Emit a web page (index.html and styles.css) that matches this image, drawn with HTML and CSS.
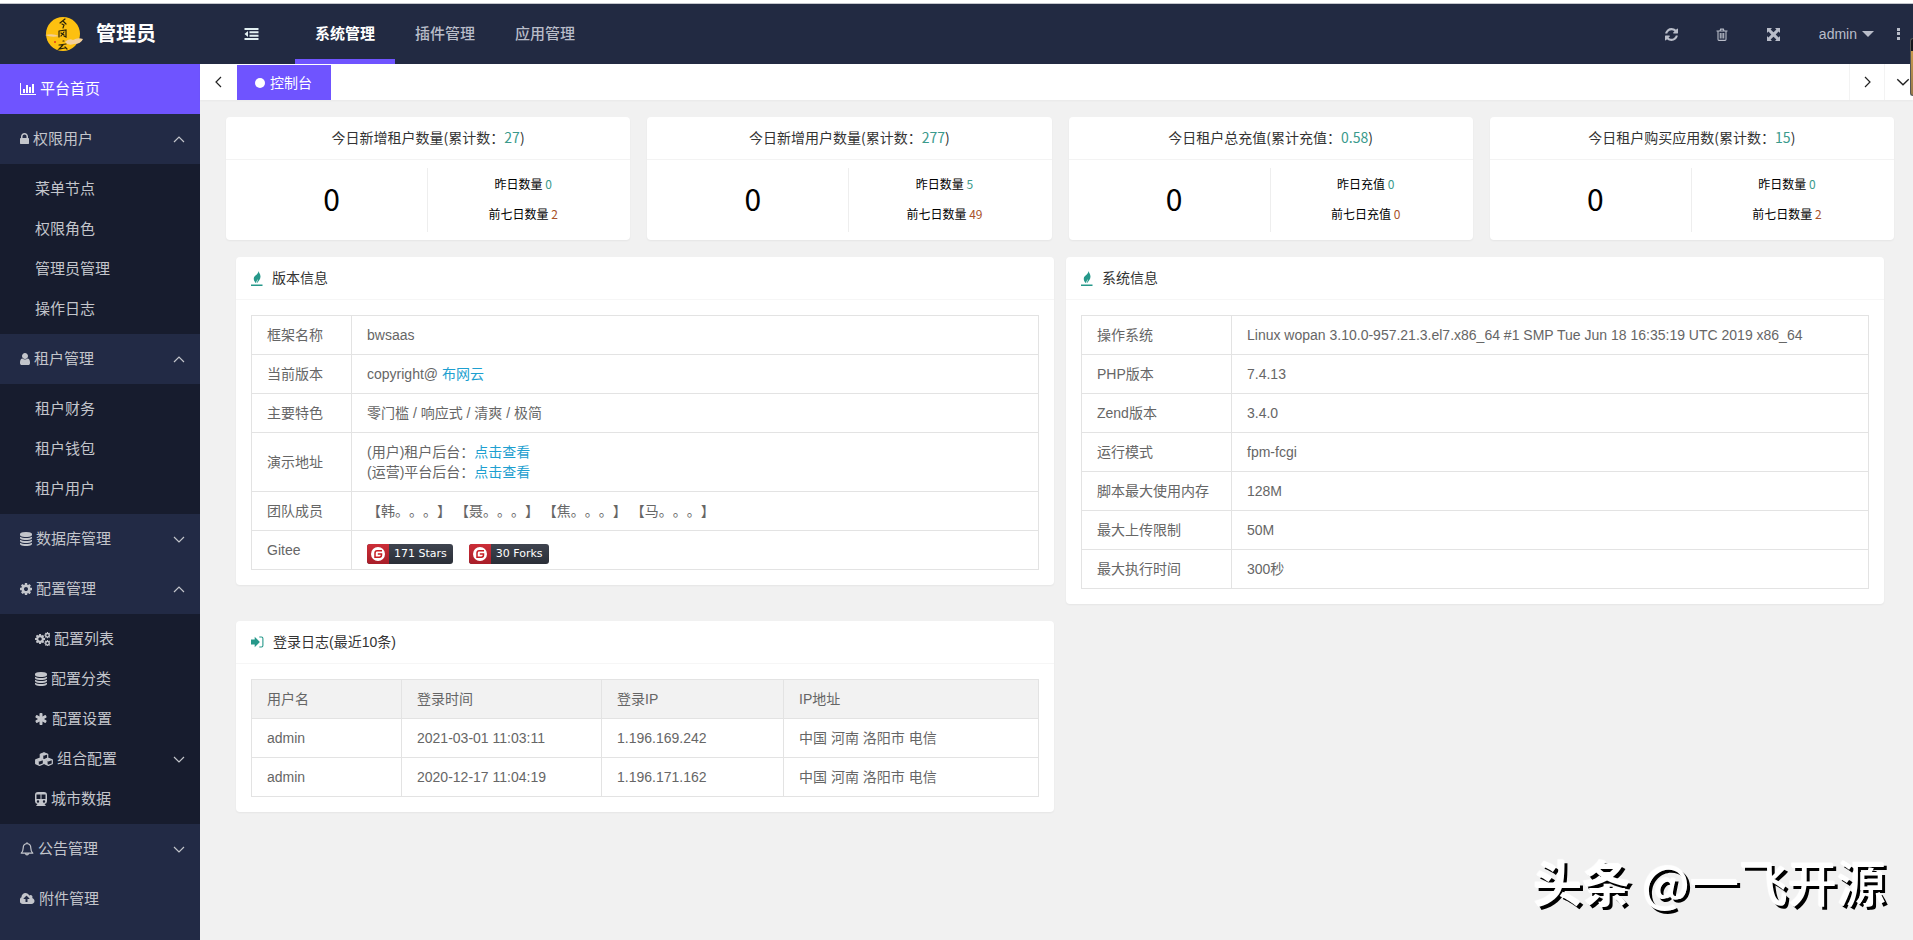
FILE: index.html
```html
<!DOCTYPE html>
<html lang="zh-CN">
<head>
<meta charset="utf-8">
<title>管理员</title>
<link rel="stylesheet" href="styles.css">
</head>
<body>
<svg class="sprite" aria-hidden="true">
  <symbol id="i-chart" viewBox="0 0 2048 1792"><path d="M640 896v512h-256v-512h256zm384-512v1024h-256v-1024h256zm1024 1152v128h-2048v-1536h128v1408h1920zm-640-896v768h-256v-768h256zm384-384v1152h-256v-1152h256z"/></symbol>
  <symbol id="i-lock" viewBox="320 0 1152 1792"><path d="M640 768h512v-192q0-106-75-181t-181-75-181 75-75 181v192zm832 96v576q0 40-28 68t-68 28h-960q-40 0-68-28t-28-68v-576q0-40 28-68t68-28h32v-192q0-184 132-316t316-132 316 132 132 316v192h32q40 0 68 28t28 68z"/></symbol>
  <symbol id="i-user" viewBox="256 0 1280 1792"><path d="M1536 1399q0 109-62.500 187t-150.500 78h-854q-88 0-150.500-78t-62.500-187q0-85 8.500-160.500t31.500-152 58.500-131 94-89 134.500-34.500q131 128 313 128t313-128q76 0 134.500 34.500t94 89 58.500 131 31.500 152 8.500 160.500zm-256-887q0 159-112.500 271.500t-271.500 112.500-271.500-112.500-112.500-271.500 112.500-271.500 271.500-112.500 271.500 112.500 112.500 271.500z"/></symbol>
  <symbol id="i-db" viewBox="128 0 1536 1792"><path d="M896 768q237 0 443-43t325-127v170q0 69-103 128t-280 93.500-385 34.500-385-34.500-280-93.500-103-128v-170q119 84 325 127t443 43zm0 768q237 0 443-43t325-127v170q0 69-103 128t-280 93.500-385 34.500-385-34.500-280-93.500-103-128v-170q119 84 325 127t443 43zm0-384q237 0 443-43t325-127v170q0 69-103 128t-280 93.500-385 34.500-385-34.500-280-93.500-103-128v-170q119 84 325 127t443 43zm0-1152q208 0 385 34.500t280 93.500 103 128v128q0 69-103 128t-280 93.500-385 34.500-385-34.500-280-93.500-103-128v-128q0-69 103-128t280-93.500 385-34.500z"/></symbol>
  <symbol id="i-cog" viewBox="128 0 1536 1792"><path id="cog" d="M1152 896q0-106-75-181t-181-75-181 75-75 181 75 181 181 75 181-75 75-181zm512-109v222q0 12-8 23t-20 13l-185 28q-19 54-39 91 35 50 107 138 10 12 10 25t-9 23q-27 37-99 108t-94 71q-12 0-26-9l-138-108q-44 23-91 38-16 136-29 186-7 28-36 28h-222q-14 0-24.500-8.500t-11.500-21.500l-28-184q-49-16-90-37l-141 107q-10 9-25 9-14 0-25-11-126-114-165-168-7-10-7-23 0-12 8-23 15-21 51-66.500t54-70.500q-27-50-41-99l-183-27q-13-2-21-12.500t-8-23.500v-222q0-12 8-23t19-13l186-28q14-46 39-92-40-57-107-138-10-12-10-24 0-10 9-23 26-36 98.500-107.500t94.500-71.500q13 0 26 10l138 107q44-23 91-38 16-136 29-186 7-28 36-28h222q14 0 24.500 8.500t11.500 21.500l28 184q49 16 90 37l142-107q9-9 24-9 13 0 25 10 129 119 165 170 7 8 7 22 0 12-8 23-15 21-51 66.500t-54 70.500q26 50 41 98l183 28q13 2 21 12.500t8 23.500z"/></symbol>
  <symbol id="i-cogs" viewBox="0 0 1920 1792"><use href="#cog" transform="translate(-106 142) scale(.84)"/><use href="#cog" transform="translate(1130 -60) scale(.52)"/><use href="#cog" transform="translate(1130 960) scale(.52)"/></symbol>
  <symbol id="i-star" viewBox="128 0 1664 1792"><path d="M1546 1050q46 26 59.500 77.500t-12.500 97.500l-64 110q-26 46-77.500 59.500t-97.500-12.500l-266-153v307q0 52-38 90t-90 38h-128q-52 0-90-38t-38-90v-307l-266 153q-46 26-97.500 12.500t-77.500-59.500l-64-110q-26-46-12.500-97.500t59.500-77.500l266-154-266-154q-46-26-59.500-77.500t12.500-97.500l64-110q26-46 77.500-59.500t97.500 12.500l266 153v-307q0-52 38-90t90-38h128q52 0 90 38t38 90v307l266-153q46-26 97.500-12.500t77.500 59.500l64 110q26 46 12.500 97.500t-59.500 77.500l-266 154z"/></symbol>
  <symbol id="i-cubes" viewBox="0 0 18 14"><g fill="none" stroke="currentColor" stroke-width="1.200" stroke-linejoin="round"><path d="M9 .7l3.700 1.500v3.900L9 7.700 5.300 6.100V2.200zM4.600 6.400l3.800 1.500v3.800l-3.800 1.700-3.900-1.700V7.900zM13.400 6.400l3.900 1.500v3.800l-3.900 1.700-3.800-1.700V7.900z"/></g><path d="M5.300 2.200L9 .7l3.700 1.500L9 3.800zM.7 7.900l3.900-1.500 3.800 1.500-3.800 1.700zM9.600 7.900l3.800-1.500 3.900 1.500-3.900 1.700zM5.300 2.200L8.300 3.500v4L5.300 6.100zM.7 7.900l3.100 1.300V13L.7 11.700zM9.600 7.900l3 1.300V13l-3-1.300z"/></symbol>
  <symbol id="i-train" viewBox="0 0 12 14"><path fill-rule="evenodd" d="M3 0h6a3 3 0 0 1 3 3v6a3 3 0 0 1-2.500 3l1.500 2H1l1.500-2A3 3 0 0 1 0 9V3a3 3 0 0 1 3-3zM1.500 2.500V7h4V2.500zm5 0V7h4V2.500zM3 8.300a1.200 1.200 0 1 0 0 2.400 1.200 1.200 0 0 0 0-2.400zm6 0a1.200 1.200 0 1 0 0 2.400 1.200 1.200 0 0 0 0-2.400z"/></symbol>
  <symbol id="i-bell" viewBox="0 0 14 14"><path d="M7 1.500C4.300 1.800 3.200 3.600 3.200 6c0 2.600-.7 4-2 5.200h11.600c-1.300-1.200-2-2.600-2-5.200 0-2.400-1.100-4.200-3.800-4.500zM7 .2v1.300M5.600 11.500a1.400 1.400 0 0 0 2.800 0" fill="none" stroke="currentColor" stroke-width="1.200" stroke-linejoin="round"/></symbol>
  <symbol id="i-cloud" viewBox="0 0 1920 1792"><path d="M1216 864q0-14-9-23l-352-352q-9-9-23-9t-23 9l-351 351q-10 12-10 24 0 14 9 23t23 9h224v352q0 13 9.500 22.500t22.500 9.500h192q13 0 22.500-9.500t9.500-22.500v-352h224q13 0 22.500-9.500t9.500-22.500zm640 288q0 159-112.500 271.500t-271.500 112.500h-1088q-185 0-316.500-131.500t-131.500-316.500q0-130 70-240t188-165q-2-30-2-43 0-212 150-362t362-150q156 0 285.500 87t188.500 231q71-62 166-62 106 0 181 75t75 181q0 76-41 138 130 31 213.500 135.500t83.500 238.500z"/></symbol>
  <symbol id="i-refresh" viewBox="128 128 1536 1536"><path d="M1639 1056q0 5-1 7-64 268-268 434.500t-478 166.500q-146 0-282.500-55t-243.500-157l-129 129q-19 19-45 19t-45-19-19-45v-448q0-26 19-45t45-19h448q26 0 45 19t19 45-19 45l-137 137q71 66 161 102t187 36q134 0 250-65t186-179q11-17 53-117 8-23 30-23h192q13 0 22.500 9.500t9.500 22.500zm25-800v448q0 26-19 45t-45 19h-448q-26 0-45-19t-19-45 19-45l138-138q-148-137-349-137-134 0-250 65t-186 179q-11 17-53 117-8 23-30 23h-199q-13 0-22.500-9.500t-9.500-22.500v-7q65-268 270-434.500t480-166.500q146 0 284 55.500t245 156.500l130-129q19-19 45-19t45 19 19 45z"/></symbol>
  <symbol id="i-trash" viewBox="0 0 12 13"><path d="M.5 3h11M4 3l.6-1.900h2.800L8 3M2 3v8.300q0 1.100 1 1.100h6q1 0 1-1.100V3M4.300 5v5.500M6 5v5.500M7.700 5v5.500" fill="none" stroke="currentColor" stroke-width="1.100"/></symbol>
  <symbol id="i-expand" viewBox="0 0 13 13"><path d="M0 0h5L3.600 1.400 6.500 4.300 9.400 1.400 8 0h5v5l-1.400-1.400-2.900 2.900 2.900 2.900L13 8v5H8l1.400-1.400-2.900-2.900-2.900 2.900L5 13H0V8l1.400 1.400 2.900-2.900-2.900-2.900L0 5z"/></symbol>
  <symbol id="i-fold" viewBox="0 0 14 12"><path d="M0 0h14v2H0zM5 3.300h9v2H5zM5 6.700h9v2H5zM0 10h14v2H0zM3.500 3v6L0 6z"/></symbol>
  <symbol id="i-up" viewBox="0 0 12 7"><path d="M1 6l5-5 5 5" fill="none" stroke="currentColor" stroke-width="1.200"/></symbol>
  <symbol id="i-down" viewBox="0 0 12 7"><path d="M1 1l5 5 5-5" fill="none" stroke="currentColor" stroke-width="1.200"/></symbol>
  <symbol id="i-fire" viewBox="0 0 12 15"><path d="M7.500 0c.3 1.600 2.100 3.100 2 5.700-.1 2.800-2.200 4.300-3.400 6.500-.2-1.900.7-2.700 1-4.200C6 9.200 5.300 10.400 5.100 12.200 3.400 11 2.600 9.200 2.800 7.300 3.100 4.400 7.300 3.700 7.500 0zM0 13.500h11.500V15H0z"/></symbol>
  <symbol id="i-login" viewBox="0 0 13 12"><path d="M0 3.500h3.700V.8L8.900 6l-5.200 5.200V8.500H0z"/><path d="M8.300 1h2.200q1.400 0 1.400 1.400v7.200q0 1.400-1.400 1.400H8.300" fill="none" stroke="currentColor" stroke-width="1.100"/></symbol>
  <symbol id="i-gitee" viewBox="0 0 16 16"><circle cx="8" cy="8" r="7" fill="#fff"/><path d="M12 4.800H7.200Q5 4.800 5 7v4.200h4.300q2.200 0 2.200-2.200v-.9H7.800" fill="none" stroke="#c71d23" stroke-width="1.500"/></symbol>
</svg>

<div class="frame-top"></div>
<header class="header">
  <div class="brand">
    <svg class="brand-logo" viewBox="0 0 38 36" aria-hidden="true">
      <ellipse cx="18" cy="18" rx="17" ry="17" fill="#fdc010"/>
      <path d="M0 19q8-2 14 1-7 2-14-1zM20 26q4-4 8-2 5-3 10-1-2 5-9 5-6 2-9-2z" fill="#f3cf9a"/>
      <path d="M20 3l-5 4M18 5l3 3M17 8l2 1-1 3M14 15v6M14 15l7-1v7l-2-1M16 17l3 2M19 16l-3 4M18 25h1M14 29l7-1M18 29l-4 4 6-1M20 31l2 2" fill="none" stroke="#2a2308" stroke-width="1.200" stroke-linecap="round"/>
      <circle cx="10" cy="26" r="1" fill="#e03a1c"/>
    </svg>
    <span class="brand-name">管理员</span>
  </div>
  <button class="fold" type="button" aria-label="折叠菜单"><svg width="15" height="12"><use href="#i-fold"/></svg></button>
  <nav class="topnav">
    <a class="topnav-item is-active" href="#">系统管理</a>
    <a class="topnav-item" href="#">插件管理</a>
    <a class="topnav-item" href="#">应用管理</a>
  </nav>
  <div class="tools">
    <button class="tool" type="button" aria-label="刷新"><svg width="13" height="13"><use href="#i-refresh"/></svg></button>
    <button class="tool" type="button" aria-label="清除缓存"><svg width="12" height="13"><use href="#i-trash"/></svg></button>
    <button class="tool" type="button" aria-label="全屏"><svg width="13" height="13"><use href="#i-expand"/></svg></button>
    <button class="account" type="button">admin<span class="caret"></span></button>
    <button class="more" type="button" aria-label="更多"><svg width="4" height="12" viewBox="0 0 4 12"><path d="M0 0h3v3H0zM0 4h3v3H0zM0 9h3v3H0z"/></svg></button>
  </div>
</header>

<div class="shell">
  <nav class="side">
    <a class="side-item is-active" href="#"><svg width="16" height="14"><use href="#i-chart"/></svg>平台首页</a>
    <a class="side-item" href="#"><svg width="9" height="14"><use href="#i-lock"/></svg>权限用户<svg class="arrow" width="12" height="7"><use href="#i-up"/></svg></a>
    <div class="side-group">
      <a class="side-sub" href="#">菜单节点</a>
      <a class="side-sub" href="#">权限角色</a>
      <a class="side-sub" href="#">管理员管理</a>
      <a class="side-sub" href="#">操作日志</a>
    </div>
    <a class="side-item" href="#"><svg width="10" height="14"><use href="#i-user"/></svg>租户管理<svg class="arrow" width="12" height="7"><use href="#i-up"/></svg></a>
    <div class="side-group">
      <a class="side-sub" href="#">租户财务</a>
      <a class="side-sub" href="#">租户钱包</a>
      <a class="side-sub" href="#">租户用户</a>
    </div>
    <a class="side-item" href="#"><svg width="12" height="14"><use href="#i-db"/></svg>数据库管理<svg class="arrow" width="12" height="7"><use href="#i-down"/></svg></a>
    <a class="side-item" href="#"><svg width="12" height="14"><use href="#i-cog"/></svg>配置管理<svg class="arrow" width="12" height="7"><use href="#i-up"/></svg></a>
    <div class="side-group">
      <a class="side-sub" href="#"><svg width="15" height="14"><use href="#i-cogs"/></svg>配置列表</a>
      <a class="side-sub" href="#"><svg width="12" height="14"><use href="#i-db"/></svg>配置分类</a>
      <a class="side-sub" href="#"><svg width="13" height="14"><use href="#i-star"/></svg>配置设置</a>
      <a class="side-sub" href="#"><svg width="18" height="14"><use href="#i-cubes"/></svg>组合配置<svg class="arrow" width="12" height="7"><use href="#i-down"/></svg></a>
      <a class="side-sub" href="#"><svg width="12" height="14"><use href="#i-train"/></svg>城市数据</a>
    </div>
    <a class="side-item" href="#"><svg width="14" height="14"><use href="#i-bell"/></svg>公告管理<svg class="arrow" width="12" height="7"><use href="#i-down"/></svg></a>
    <a class="side-item" href="#"><svg width="15" height="14"><use href="#i-cloud"/></svg>附件管理</a>
  </nav>

  <main class="main">
    <div class="tabs">
      <button class="tabs-btn tabs-prev" type="button" aria-label="向左"><svg width="7" height="12" viewBox="0 0 7 12"><path d="M6 1L1 6l5 5" fill="none" stroke="currentColor" stroke-width="1.200"/></svg></button>
      <a class="tab" href="#"><span class="dot"></span>控制台</a>
      <button class="tabs-btn tabs-next" type="button" aria-label="向右"><svg width="7" height="12" viewBox="0 0 7 12"><path d="M1 1l5 5-5 5" fill="none" stroke="currentColor" stroke-width="1.200"/></svg></button>
      <button class="tabs-btn tabs-menu" type="button" aria-label="标签操作"><svg width="14" height="8"><use href="#i-down"/></svg></button>
    </div>

    <section class="stats">
      <article class="card">
        <h2 class="stat-title">今日新增租户数量(累计数<span class="colon">：</span><span class="teal">27</span>)</h2>
        <div class="stat-body"><div class="stat-num">0</div><div class="stat-side"><p>昨日数量 <span class="teal">0</span></p><p>前七日数量 <span class="rust">2</span></p></div></div>
      </article>
      <article class="card">
        <h2 class="stat-title">今日新增用户数量(累计数<span class="colon">：</span><span class="teal">277</span>)</h2>
        <div class="stat-body"><div class="stat-num">0</div><div class="stat-side"><p>昨日数量 <span class="teal">5</span></p><p>前七日数量 <span class="rust">49</span></p></div></div>
      </article>
      <article class="card">
        <h2 class="stat-title">今日租户总充值(累计充值<span class="colon">：</span><span class="teal">0.58</span>)</h2>
        <div class="stat-body"><div class="stat-num">0</div><div class="stat-side"><p>昨日充值 <span class="teal">0</span></p><p>前七日充值 <span class="rust">0</span></p></div></div>
      </article>
      <article class="card">
        <h2 class="stat-title">今日租户购买应用数(累计数<span class="colon">：</span><span class="teal">15</span>)</h2>
        <div class="stat-body"><div class="stat-num">0</div><div class="stat-side"><p>昨日数量 <span class="teal">0</span></p><p>前七日数量 <span class="rust">2</span></p></div></div>
      </article>
    </section>

    <section class="panels">
      <article class="card">
        <h2 class="panel-title"><svg width="12" height="15"><use href="#i-fire"/></svg>版本信息</h2>
        <div class="panel-body">
          <table class="table">
            <colgroup><col class="w100"><col></colgroup>
            <tbody>
              <tr><td>框架名称</td><td>bwsaas</td></tr>
              <tr><td>当前版本</td><td>copyright@ <a href="#">布网云</a></td></tr>
              <tr><td>主要特色</td><td>零门槛 / 响应式 / 清爽 / 极简</td></tr>
              <tr><td>演示地址</td><td>(用户)租户后台<span class="colon">：</span><a href="#">点击查看</a><br>(运营)平台后台<span class="colon">：</span><a href="#">点击查看</a></td></tr>
              <tr><td>团队成员</td><td>【韩。。。】 【聂。。。】 【焦。。。】 【马。。。】</td></tr>
              <tr><td>Gitee</td><td class="badge-cell"><div class="badges"><a class="badge" href="#"><span class="badge-mark"><svg width="16" height="16"><use href="#i-gitee"/></svg></span><span class="badge-text">171 Stars</span></a><a class="badge" href="#"><span class="badge-mark"><svg width="16" height="16"><use href="#i-gitee"/></svg></span><span class="badge-text">30 Forks</span></a></div></td></tr>
            </tbody>
          </table>
        </div>
      </article>
      <article class="card">
        <h2 class="panel-title"><svg width="12" height="15"><use href="#i-fire"/></svg>系统信息</h2>
        <div class="panel-body">
          <table class="table">
            <colgroup><col class="w150"><col></colgroup>
            <tbody>
              <tr><td>操作系统</td><td>Linux wopan 3.10.0-957.21.3.el7.x86_64 #1 SMP Tue Jun 18 16:35:19 UTC 2019 x86_64</td></tr>
              <tr><td>PHP版本</td><td>7.4.13</td></tr>
              <tr><td>Zend版本</td><td>3.4.0</td></tr>
              <tr><td>运行模式</td><td>fpm-fcgi</td></tr>
              <tr><td>脚本最大使用内存</td><td>128M</td></tr>
              <tr><td>最大上传限制</td><td>50M</td></tr>
              <tr><td>最大执行时间</td><td>300秒</td></tr>
            </tbody>
          </table>
        </div>
      </article>
      <article class="card">
        <h2 class="panel-title"><svg width="13" height="12"><use href="#i-login"/></svg>登录日志(最近10条)</h2>
        <div class="panel-body">
          <table class="table">
            <colgroup><col class="w150"><col class="w200"><col class="w182"><col></colgroup>
            <thead><tr><th>用户名</th><th>登录时间</th><th>登录IP</th><th>IP地址</th></tr></thead>
            <tbody>
              <tr><td>admin</td><td>2021-03-01 11:03:11</td><td>1.196.169.242</td><td>中国 河南 洛阳市 电信</td></tr>
              <tr><td>admin</td><td>2020-12-17 11:04:19</td><td>1.196.171.162</td><td>中国 河南 洛阳市 电信</td></tr>
            </tbody>
          </table>
        </div>
      </article>
    </section>
  </main>
</div>
<div class="edge-widget"></div>
<div class="watermark"><b>头条</b> @一飞开源</div>
</body>
</html>
```
FILE: styles.css
```css
* { box-sizing: border-box; }
body {
  margin: 0;
  min-height: 100vh;
  display: flex;
  flex-direction: column;
  position: relative;
  overflow-x: hidden;
  background: #f1f1f1;
  color: #333;
  font: 14px/20px "Liberation Sans", "Noto Sans CJK SC", sans-serif;
  text-spacing-trim: space-all;
}
a { text-decoration: none; color: inherit; }
button { border: 0; padding: 0; background: none; color: inherit; font: inherit; cursor: pointer; }
h2, p { margin: 0; font-weight: 400; }
svg { fill: currentColor; flex: none; display: block; }
.sprite { position: absolute; width: 0; height: 0; }
.colon { font-family: "Noto Sans CJK JP", sans-serif; line-height: 1; }

.frame-top { height: 4px; background: #fff; border-bottom: 1px solid #c4c6cc; }
.header { display: flex; align-items: center; height: 60px; background: #222a42; color: #b9bdc9; }
.brand { width: 200px; padding-left: 45px; display: flex; align-items: center; gap: 13px; }
.brand-logo { width: 38px; height: 36px; }
.brand-name { font-size: 20px; line-height: 30px; font-weight: 700; color: #fff; }
.fold { width: 95px; height: 60px; padding-left: 44px; color: #e2f0f2; }
.topnav { display: flex; height: 60px; }
.topnav-item { width: 100px; line-height: 60px; text-align: center; font-size: 15px; font-weight: 500; border-bottom: 5px solid transparent; height: 60px; }
.topnav-item.is-active { color: #fff; border-color: #6f54ff; font-weight: 700; }
.tools { margin-left: auto; display: flex; align-items: center; height: 60px; }
.tool { width: 51px; height: 60px; display: flex; align-items: center; justify-content: center; }
.account { display: flex; align-items: center; gap: 5px; margin-left: 20px; }
.caret { border: 6px solid transparent; border-top-color: currentColor; border-bottom: 0; }
.more { margin: 0 12px 0 23px; }

.shell { flex: 1; display: flex; }
.side { width: 200px; flex: none; background: #222a45; color: #c3c5cb; font-size: 15px; }
.side-item, .side-sub { display: flex; align-items: center; gap: 4px; height: 50px; padding: 0 15px 0 20px; }
.side-item.is-active { background: #6f54ff; color: #fff; }
.side-group { background: #171c2e; padding: 5px 0; }
.side-sub { height: 40px; padding-left: 35px; }
.arrow { margin-left: auto; }

.main { flex: 1; min-width: 0; }
.tabs { display: flex; height: 36px; background: #fff; color: #222; box-shadow: 0 1px 2px rgba(0, 0, 0, .04); }
.tabs-btn { display: flex; align-items: center; justify-content: center; width: 37px; }
.tab { display: flex; align-items: center; gap: 5px; padding: 0 19px 0 18px; margin-top: 1px; background: #6f54ff; color: #fff; }
.dot { width: 10px; height: 10px; border-radius: 50%; background: #fff; }
.tabs-next { width: 35px; margin-left: auto; border-left: 1px solid #f3f3f3; }
.tabs-menu { width: 29px; border-left: 1px solid #f3f3f3; padding-left: 8px; }

.card { background: #fff; border-radius: 4px; box-shadow: 0 1px 2px rgba(0, 0, 0, .05); }
.stats { display: grid; grid-template-columns: repeat(4, 1fr); gap: 17px; padding: 17px 19px 0 26px; font-family: "Noto Sans CJK SC", sans-serif; }
.stat-title { font-size: 14px; line-height: 20px; padding: 10px 0 12px; text-align: center; border-bottom: 1px solid #f3f3f3; }
.stat-body { display: grid; grid-template-columns: 1fr 1fr; padding: 8px 10px; color: #000; }
.stat-num { height: 64px; font-size: 30px; line-height: 60px; text-align: center; border-right: 1px solid #eee; }
.stat-side { padding: 1px 2px 3px 0; font-size: 12px; line-height: 30px; text-align: center; }
.teal { color: #3a9a8c; }
.rust { color: #a8522a; }

.panels { display: grid; grid-template-columns: 1fr 1fr; align-items: start; gap: 17px 12px; padding: 17px 29px 17px 36px; }
.panel-title { display: flex; align-items: center; gap: 9px; padding: 0 15px; font-size: 14px; line-height: 42px; border-bottom: 1px solid #f6f6f6; }
.panel-title svg { color: #26988a; }
.panel-body { padding: 15px; }
.table { width: 100%; table-layout: fixed; border-collapse: collapse; color: #666; }
.table td, .table th { border: 1px solid #e3e3e3; padding: 9px 15px; line-height: 20px; font-weight: 400; text-align: left; }
.table th { background: #f2f2f2; }
.table a { color: #1e9fd0; }
.w100 { width: 100px; }
.w150 { width: 150px; }
.w182 { width: 182px; }
.w200 { width: 200px; }
.table .badge-cell { padding: 13px 15px 5px; }
.badges { display: flex; gap: 16px; }
.table .badge { display: flex; height: 20px; border-radius: 3px; overflow: hidden; background: linear-gradient(#3f444f, #2a2e37); color: #fff; font: 11px/20px "DejaVu Sans", sans-serif; }
.badge-mark { width: 22px; display: flex; align-items: center; justify-content: center; background: linear-gradient(#cc2e38, #a81d28); }
.badge-text { padding: 0 6px 0 5px; }

.edge-widget { position: absolute; right: 0; top: 38px; width: 3px; height: 58px; border: 1px solid #555; border-right: 0; border-radius: 4px 0 0 4px; background: linear-gradient(#15161c 12px, #c99a4c 12px, #9a7a4a); }
.watermark { position: absolute; right: 27px; bottom: 27px; font: 500 49px/64px "Noto Sans CJK SC", sans-serif; color: #fff; text-shadow: 3px 3px 0 #000, -1px -1px 1px #fff; }
```
